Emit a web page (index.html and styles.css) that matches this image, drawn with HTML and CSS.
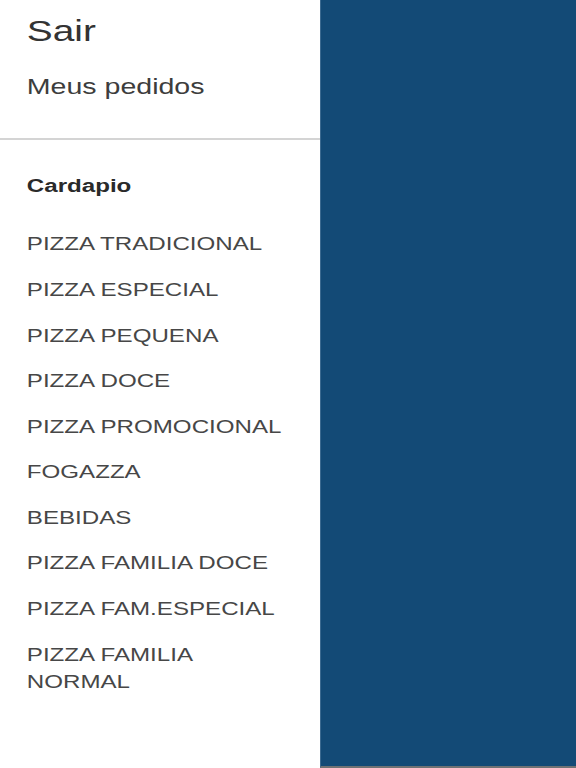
FILE: index.html
```html
<!DOCTYPE html>
<html lang="pt">
<head>
<meta charset="utf-8">
<title>Menu</title>
<link rel="stylesheet" href="styles.css">
</head>
<body>
<div class="screen">
  <aside class="drawer">
    <div class="drawer-inner">
      <div class="account">
        <a class="logout">Sair</a>
        <a class="orders">Meus pedidos</a>
      </div>
      <nav class="menu">
        <h2 class="menu-title">Cardapio</h2>
        <ul class="menu-list">
          <li class="menu-item">PIZZA TRADICIONAL</li>
          <li class="menu-item">PIZZA ESPECIAL</li>
          <li class="menu-item">PIZZA PEQUENA</li>
          <li class="menu-item">PIZZA DOCE</li>
          <li class="menu-item">PIZZA PROMOCIONAL</li>
          <li class="menu-item">FOGAZZA</li>
          <li class="menu-item">BEBIDAS</li>
          <li class="menu-item">PIZZA FAMILIA DOCE</li>
          <li class="menu-item">PIZZA FAM.ESPECIAL</li>
          <li class="menu-item">PIZZA FAMILIA NORMAL</li>
        </ul>
      </nav>
    </div>
  </aside>
  <main class="content"></main>
</div>
</body>
</html>
```
FILE: styles.css
```css
html, body {
  margin: 0;
  padding: 0;
  height: 100%;
}
body {
  font-family: "Liberation Sans", Arial, sans-serif;
  background: #ffffff;
}
.screen {
  display: flex;
  width: 576px;
  height: 768px;
  overflow: hidden;
}
.drawer {
  width: 320px;
  flex: 0 0 320px;
  background: #ffffff;
  overflow: hidden;
}
.drawer-inner {
  width: 239px;
  transform: scaleX(1.34);
  transform-origin: 0 0;
}
.account {
  display: flex;
  flex-direction: column;
  padding: 12.5px 18px 35.3px 20px;
  border-bottom: 2px solid #d4d4d4;
}
.logout {
  font-size: 29px;
  line-height: 36px;
  color: #333333;
}
.orders {
  margin-top: 22.2px;
  font-size: 21.3px;
  line-height: 32px;
  color: #3d3d3d;
}
.menu {
  padding: 34.4px 18px 0 20px;
}
.menu-title {
  margin: 0 0 23.9px;
  font-size: 18px;
  font-weight: bold;
  line-height: 24px;
  color: #2a2a2a;
}
.menu-list {
  list-style: none;
  margin: 0;
  padding: 0;
}
.menu-item {
  padding: 9.15px 0;
  font-size: 18px;
  line-height: 27.3px;
  color: #474747;
}
.content {
  flex: 1;
  background: #134a76;
  border-left: 1px solid #3c6a90;
  border-bottom: 2px solid #6f7274;
  box-sizing: border-box;
}
```
